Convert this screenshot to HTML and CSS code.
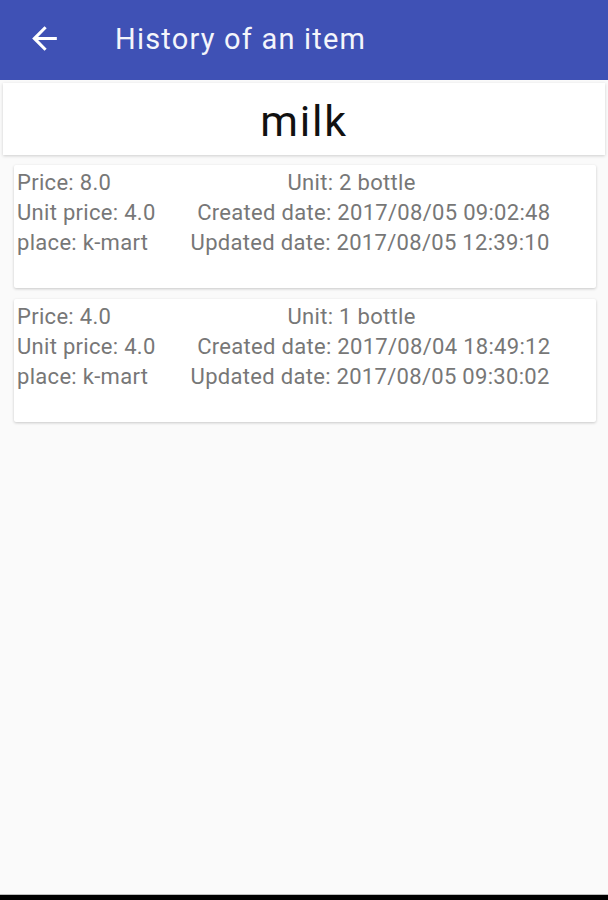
FILE: index.html
```html
<!DOCTYPE html>
<html lang="en">
<head>
    <meta charset="UTF-8">
    <meta name="viewport" content="width=device-width, initial-scale=1.0">
    <title>History of an item</title>
    <link rel="stylesheet" href="styles.css">
</head>
<body>
    <div class="screen">
        <header class="toolbar">
            <button class="back-btn" aria-label="Back">
                <svg viewBox="0 0 24 24" width="37" height="37">
                    <path d="M20 11H7.83l5.59-5.59L12 4l-8 8 8 8 1.41-1.41L7.83 13H20v-2z" fill="#fff"/>
                </svg>
            </button>
            <h1 class="toolbar-title">History of an item</h1>
        </header>

        <main class="content">
            <div class="item-name">milk</div>

            <div class="history-card">
                <div class="row">
                    <span class="left">Price: 8.0</span>
                    <span class="right">Unit: 2 bottle</span>
                </div>
                <div class="row">
                    <span class="left">Unit price: 4.0</span>
                    <span class="right">Created date: 2017/08/05 09:02:48</span>
                </div>
                <div class="row">
                    <span class="left">place: k-mart</span>
                    <span class="right">Updated date: 2017/08/05 12:39:10</span>
                </div>
            </div>

            <div class="history-card">
                <div class="row">
                    <span class="left">Price: 4.0</span>
                    <span class="right">Unit: 1 bottle</span>
                </div>
                <div class="row">
                    <span class="left">Unit price: 4.0</span>
                    <span class="right">Created date: 2017/08/04 18:49:12</span>
                </div>
                <div class="row">
                    <span class="left">place: k-mart</span>
                    <span class="right">Updated date: 2017/08/05 09:30:02</span>
                </div>
            </div>
        </main>

        <div class="nav-edge"></div>
    </div>
</body>
</html>
```

FILE: styles.css
```css
/* General */
body {
    margin: 0;
    padding: 0;
    background: #fafafa;
    font-family: Roboto, "Liberation Sans", sans-serif;
}

.screen {
    display: flex;
    flex-direction: column;
    height: 900px;
}

/* Toolbar */
.toolbar {
    display: flex;
    align-items: center;
    height: 80px;
    background: #3f51b5;
    color: #fff;
    flex-shrink: 0;
}

.back-btn {
    display: flex;
    align-items: center;
    justify-content: center;
    width: 37px;
    height: 37px;
    margin-left: 26px;
    margin-top: -4px;
    padding: 0;
    border: none;
    background: none;
}

.toolbar-title {
    margin: -3px 0 0 52px;
    font-size: 29px;
    font-weight: 400;
    letter-spacing: 1.2px;
    color: #f4f5fb;
}

/* Content */
.content {
    flex: 1;
    padding-top: 3px;
}

.item-name {
    margin: 0 3px;
    height: 72px;
    display: flex;
    align-items: center;
    justify-content: center;
    background: #fff;
    font-size: 43px;
    letter-spacing: 1.8px;
    color: #111;
    box-shadow: 0 1px 3px rgba(0, 0, 0, 0.18);
    padding-top: 4px;
    box-sizing: border-box;
}

/* History cards */
.history-card {
    margin: 10px 12px 0 14px;
    padding: 2px 4px 31px 3px;
    background: #fff;
    box-shadow: 0 1px 3px rgba(0, 0, 0, 0.2);
    border-radius: 2px;
}

.history-card + .history-card {
    margin-top: 11px;
}

.row {
    display: flex;
    height: 30px;
    align-items: center;
    font-size: 22px;
    letter-spacing: 0.3px;
    color: #777;
}

.row .right {
    flex: 1;
    text-align: center;
}

/* Bottom edge of the screen */
.nav-edge {
    height: 5px;
    background: #000;
    border-top: 1px solid #bdbdbd;
    flex-shrink: 0;
}
```
